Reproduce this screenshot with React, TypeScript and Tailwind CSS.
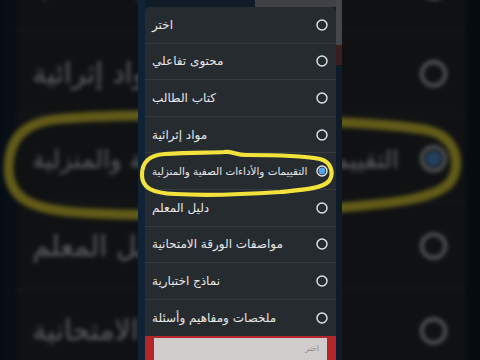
import React from "react";

const items = [
  "اختر",
  "محتوى تفاعلي",
  "كتاب الطالب",
  "مواد إثرائية",
  "التقييمات والأداءات الصفية والمنزلية",
  "دليل المعلم",
  "مواصفات الورقة الامتحانية",
  "نماذج اختبارية",
  "ملخصات ومفاهيم وأسئلة",
];

function Radio({ checked }: { checked?: boolean }) {
  return (
    <svg width="12" height="12" viewBox="0 0 12 12" className="shrink-0">
      <circle cx="6" cy="6" r="5" fill="none" stroke="#e4e6e8" strokeWidth="1.4" />
      {checked && <circle cx="6" cy="6" r="3.4" fill="#5aa3e6" />}
    </svg>
  );
}

function Phone() {
  return (
    <div className="relative w-[204px] h-[360px] flex bg-[#0e1e2e] font-['DejaVu_Sans',sans-serif]">
      {/* left margin */}
      <div className="w-[7px] h-full bg-[#0f2236]" />
      {/* center column */}
      <div className="w-[191px] flex flex-col">
        <div className="h-[7px] flex">
          <div className="w-[110px] bg-[#0f1b27]" />
          <div className="flex-1 bg-[#3e4245]" />
        </div>
        <div className="bg-[#262b30] rounded-t-[5px] flex flex-col" dir="ltr">
          {items.map((t, i) => (
            <div
              key={i}
              className="h-[36.6px] flex items-center justify-between pl-[7px] pr-[8px] border-b border-[#343a40] last:border-b-0"
            >
              <span
                dir="rtl"
                className={
                  i === 4
                    ? "text-[10.4px] leading-none text-[#e8e8e8] whitespace-nowrap"
                    : "text-[12px] leading-none text-[#e8e8e8] whitespace-nowrap"
                }
              >
                {t}
              </span>
              <Radio checked={i === 4} />
            </div>
          ))}
        </div>
        <div className="flex-1 bg-[#b3262a] px-[9px] pt-[2px]">
          <div className="h-full bg-[#d2cdcd] flex items-center justify-end px-[8px]">
            <span dir="rtl" className="text-[8px] text-[#8e8a8a]">اختر</span>
          </div>
        </div>
      </div>
      {/* right margin */}
      <div className="w-[6px] h-full flex flex-col">
        <div className="h-[45px] bg-[#44484b]" />
        <div className="h-[20px] bg-[#3a1e22]" />
        <div className="flex-1 bg-[#0e1c2a]" />
      </div>
      {/* hand-drawn yellow highlight */}
      <svg
        className="absolute left-0 top-0 pointer-events-none"
        width="204"
        height="360"
        viewBox="138 0 204 360"
      >
        <path
          d="M 165 154 C 190 152, 212 153, 224 152 C 232 151, 236 155, 246 155 C 272 155, 304 156, 320 159 C 332 162, 334 174, 329 181 C 322 189, 300 190, 280 192 C 250 194, 210 196, 175 194 C 152 193, 142 188, 142 175 C 142 161, 150 155, 165 154 Z"
          fill="none"
          stroke="#f4e23c"
          strokeWidth="4.2"
          strokeLinejoin="round"
        />
      </svg>
    </div>
  );
}

export default function App() {
  return (
    <div className="relative w-[480px] h-[360px] overflow-hidden bg-[#0b0e13]">
      <div aria-hidden className="absolute inset-0 flex justify-center scale-[2.36] brightness-[0.4] blur-[0.8px]">
        <Phone />
      </div>
      <div className="relative flex justify-center">
        <Phone />
      </div>
    </div>
  );
}
